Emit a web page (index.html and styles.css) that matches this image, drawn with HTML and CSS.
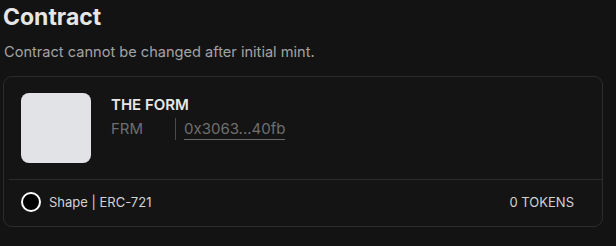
FILE: index.html
```html
<!DOCTYPE html>
<html lang="en">

<head>
    <meta charset="UTF-8">
    <meta name="viewport" content="width=device-width, initial-scale=1.0">
    <title>Contract</title>
    <link rel="stylesheet" href="styles.css">
</head>

<body>
    <div class="section">
        <h2 class="section-title">Contract</h2>
        <p class="section-desc">Contract cannot be changed after initial mint.</p>

        <div class="contract-card">
            <div class="contract-main">
                <div class="contract-thumb"></div>
                <div class="contract-info">
                    <div class="contract-name">THE FORM</div>
                    <div class="contract-meta">
                        <span class="contract-symbol">FRM</span>
                        <a class="contract-address" href="#">0x3063...40fb</a>
                    </div>
                </div>
            </div>
            <div class="contract-footer">
                <div class="chain">
                    <span class="chain-icon"></span>
                    <span>Shape | ERC-721</span>
                </div>
                <span class="token-count">0 TOKENS</span>
            </div>
        </div>
    </div>
</body>

</html>
```

FILE: styles.css
```css
body {
    margin: 0;
    background-color: #131313;
    font-family: Inter, "Noto Sans", sans-serif;
    color: #e4e4e4;
}

.section {
    padding: 2px 13px 0 3px;
}

.section-title {
    margin: 0;
    font-size: 23px;
    font-weight: 700;
    line-height: 30px;
    color: #e6e6e6;
}

.section-desc {
    margin: 11px 0 15px 1px;
    font-size: 14.6px;
    line-height: 18px;
    color: #a3a3a3;
}

.contract-card {
    border: 1.5px solid #2c2c2c;
    border-radius: 9px;
    background: #141414;
}

.contract-main {
    display: flex;
    gap: 20px;
    padding: 16px 16px 16px 17px;
}

.contract-thumb {
    width: 70px;
    height: 70px;
    border-radius: 8px;
    background: #e2e3e7;
}

.contract-info {
    padding-top: 3px;
}

.contract-name {
    font-size: 15px;
    font-weight: 600;
    line-height: 18px;
    color: #e8e8e8;
}

.contract-meta {
    display: flex;
    align-items: center;
    margin-top: 4px;
    font-size: 15px;
    color: #6f6f6f;
}

.contract-symbol {
    width: 64px;
    line-height: 22px;
}

.contract-address {
    border-left: 1px solid #4a4a4a;
    padding-left: 8px;
    color: #6f6f6f;
    text-decoration: none;
    line-height: 22px;
    background-image: linear-gradient(#6a6a6a, #6a6a6a);
    background-repeat: no-repeat;
    background-size: calc(100% - 8px) 1px;
    background-position: right bottom;
}

.contract-footer {
    display: flex;
    justify-content: space-between;
    align-items: center;
    margin-left: 5px;
    border-top: 1px solid #2c2c2c;
    padding: 12px 28px 14px 12px;
    font-size: 13px;
    color: #d2d2d2;
}

.chain {
    display: flex;
    align-items: center;
    gap: 8px;
}

.chain-icon {
    width: 16px;
    height: 16px;
    border: 2px solid #fff;
    border-radius: 50%;
    background: #000;
}
```
